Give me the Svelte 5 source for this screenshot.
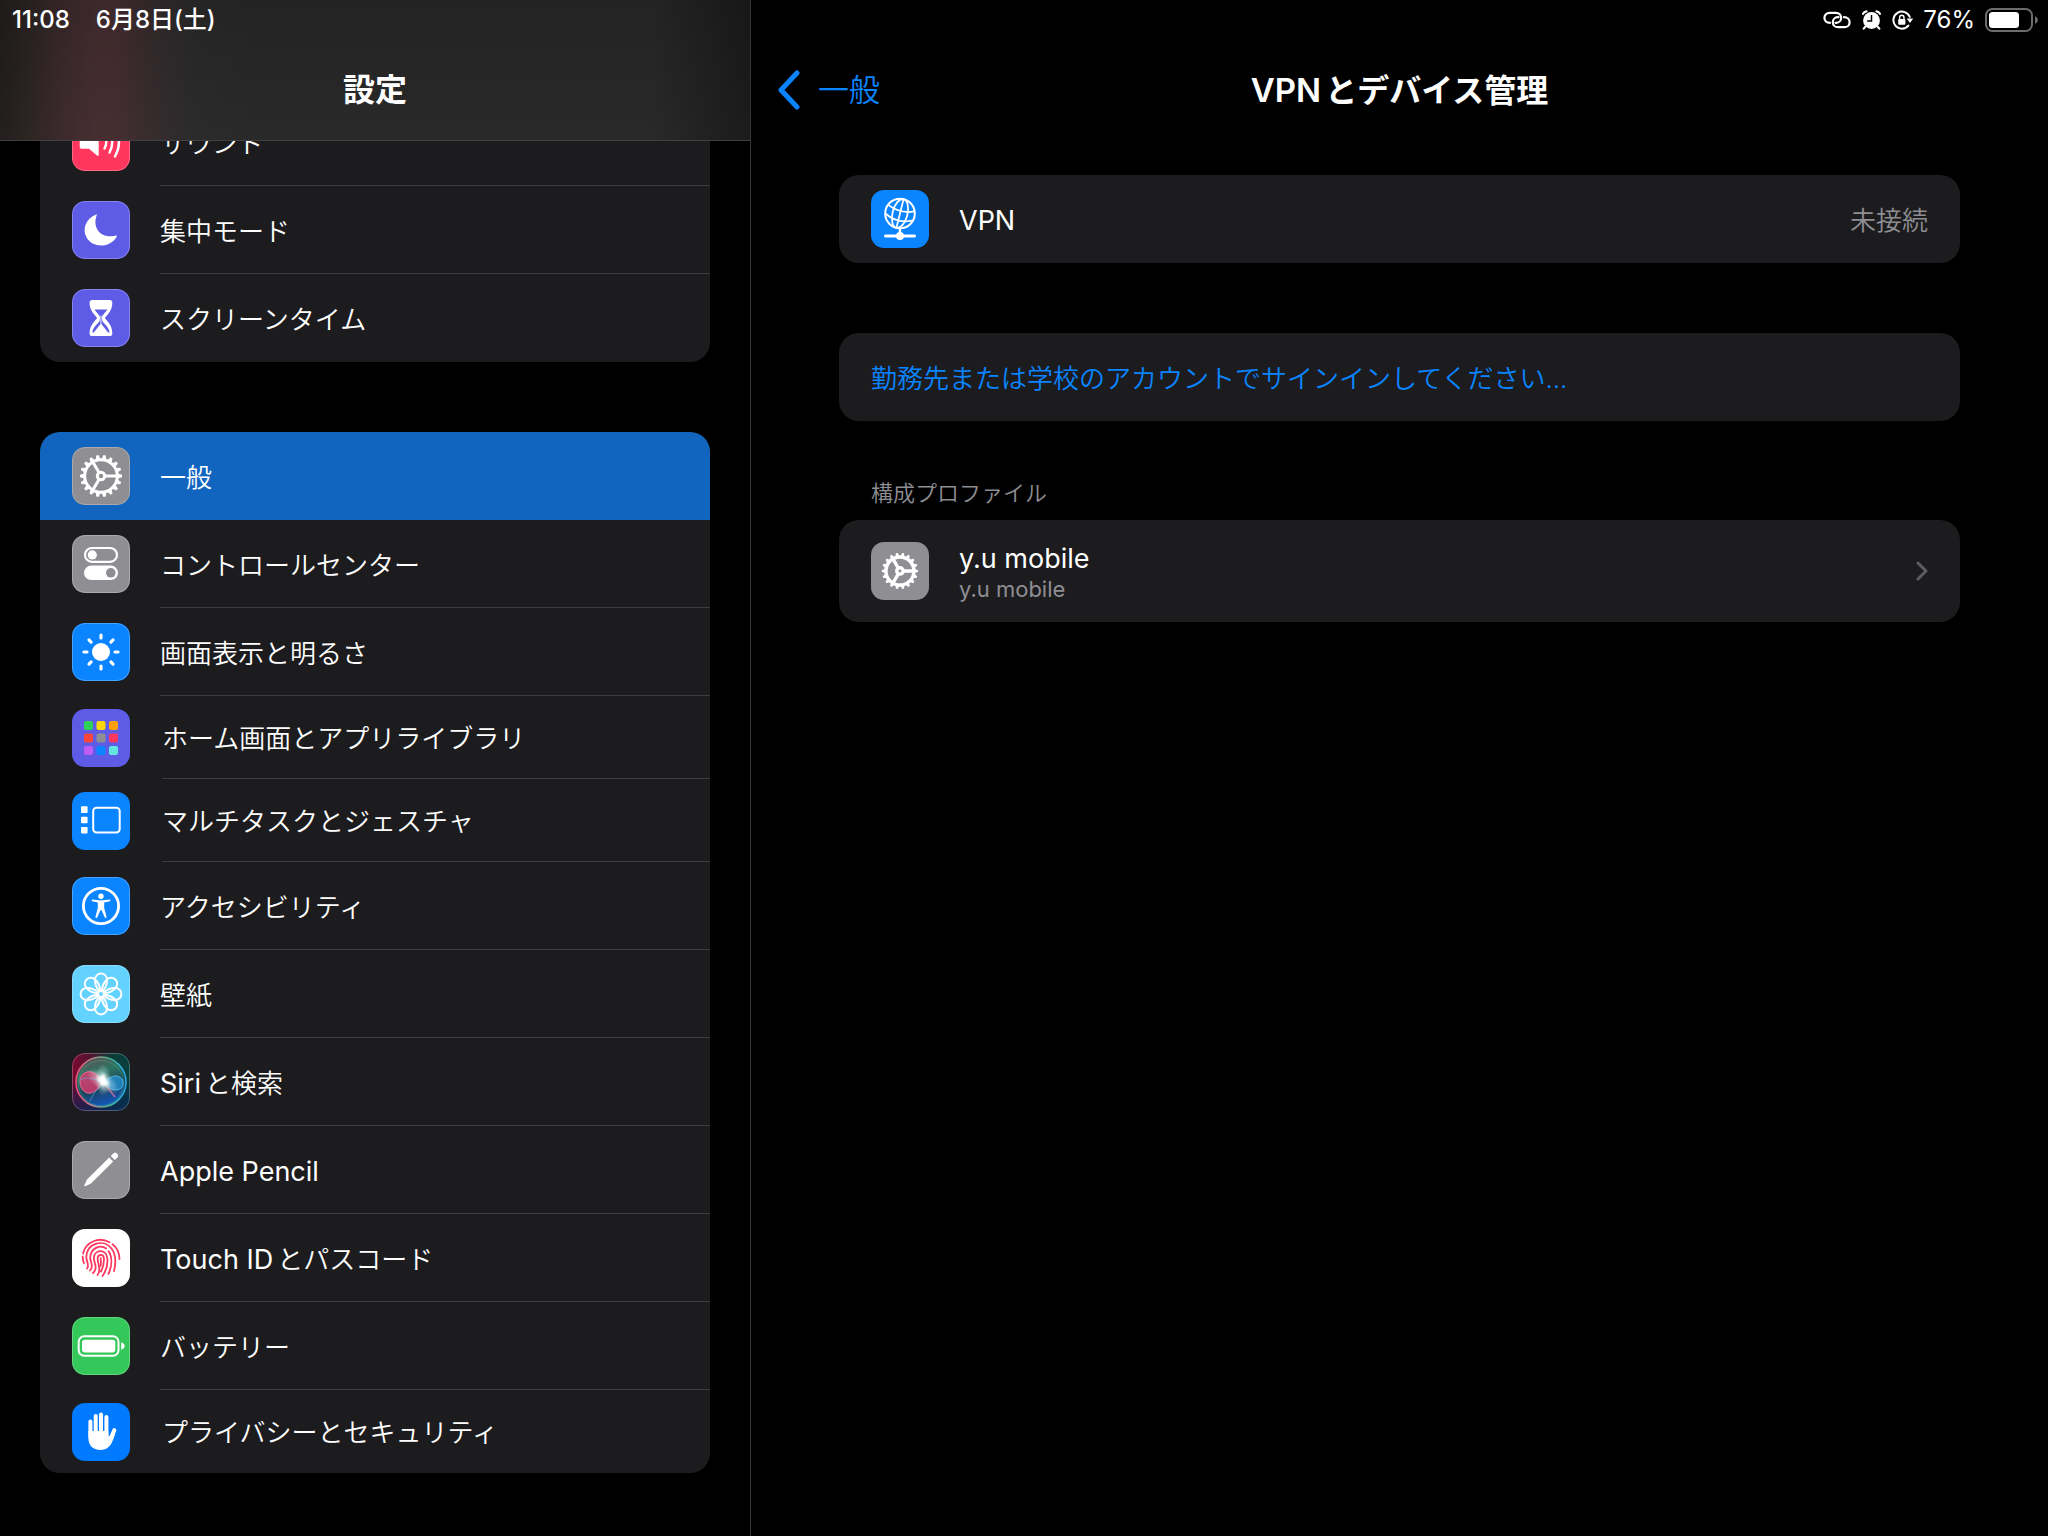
<script lang="ts">
  type Item = { icon: string; tone: string; label: string; latin?: string; compact?: boolean };

  const alerts: Item[] = [
    { icon: "sound", tone: "pink", label: "サウンド" },
    { icon: "moon", tone: "indigo", label: "集中モード" },
    { icon: "hourglass", tone: "indigo", label: "スクリーンタイム" }
  ];

  const device: Item[] = [
    { icon: "gear", tone: "gray", label: "一般" },
    { icon: "toggles", tone: "gray", label: "コントロールセンター" },
    { icon: "sun", tone: "blue", label: "画面表示と明るさ" },
    { icon: "grid", tone: "indigo flat", label: "ホーム画面とアプリライブラリ", compact: true },
    { icon: "multitask", tone: "blue flat", label: "マルチタスクとジェスチャ", compact: true },
    { icon: "access", tone: "blue", label: "アクセシビリティ" },
    { icon: "flower", tone: "cyan", label: "壁紙" },
    { icon: "siri", tone: "dark", latin: "Siri", label: "と検索" },
    { icon: "pencil", tone: "gray", latin: "Apple Pencil", label: "" },
    { icon: "finger", tone: "white", latin: "Touch ID", label: "とパスコード" },
    { icon: "battery", tone: "green", label: "バッテリー" },
    { icon: "hand", tone: "azure flat", label: "プライバシーとセキュリティ", compact: true }
  ];

  const appColors = [
    "#30d158", "#ffd60a", "#ff9f0a",
    "#ff453a", "#8e8e93", "#ff375f",
    "#bf5af2", "#0a84ff", "#63e6e2"
  ];

  const teeth = Array.from({ length: 18 }, (_, i) => i * 20);
  const eighths = Array.from({ length: 8 }, (_, i) => i * 45);

  let selected = $state("gear");
</script>

{#snippet gear(weight: number)}
  <g fill="none" stroke="#fff" stroke-width={weight}>
    <circle cx="29" cy="29" r="16.3" />
    <circle cx="29" cy="29" r="3.7" />
    {#each [0, 120, 240] as angle}
      <path d="M32.5 29H45" transform="rotate({angle} 29 29)" />
    {/each}
  </g>
  {#each teeth as angle}
    <path fill="#fff" d="M45.5 26.6L50 27.8V30.2L45.5 31.4Z" transform="rotate({angle} 29 29)" />
  {/each}
{/snippet}

{#snippet glyph(name: string)}
  <svg viewBox="0 0 58 58" aria-hidden="true">
    {#if name === "sound"}
      <path fill="#fff" d="M9.5 22H17L25 15.5Q26.7 14.4 26.7 16.5V41.5Q26.7 43.6 25 42.5L17 35.8H9.5Q7.7 35.8 7.7 34V24Q7.7 22 9.5 22Z" />
      <g fill="none" stroke="#fff" stroke-width="2.4" stroke-linecap="round">
        <path d="M32.5 22.5Q36 29 32.5 35.5" />
        <path d="M37.5 18.5Q43 29 37.5 39.5" />
        <path d="M43 14.5Q51 29 43 43.5" />
      </g>
    {:else if name === "moon"}
      <path fill="#fff" d="M24.2 13.4C14 17 9.9 28 14.5 36.3C19.8 46.2 35 47.6 43 38.3C44.2 36.8 45 35.2 44.7 34.7C44.3 34.1 43 34.6 41.6 34.9C29.5 37.2 20.4 28 24.4 15C25 13.4 25 13.1 24.2 13.4Z" />
    {:else if name === "hourglass"}
      <path fill="#fff" fill-rule="evenodd" d="M20.3 11H37.5Q40.3 11 40.3 13.6C40.3 20.5 37.5 23.8 32.8 29C37.5 34.2 40.3 37.8 40.3 44.4Q40.3 47 37.5 47H20.3Q17.6 47 17.6 44.4C17.6 37.8 20.5 34.2 25.2 29C20.5 23.8 17.6 20.5 17.6 13.6Q17.6 11 20.3 11ZM22.6 20.6C24 23.2 27.2 25.6 28.1 28.2L27.6 32C26 34.5 20.6 38.5 20.4 43.4H21.8L28.5 35V26.5H29.4V35L36.1 43.4H37.5C37.3 38.5 31.9 34.5 30.3 32L29.8 28.2C30.7 25.6 33.9 23.2 35.3 20.6Z" />
    {:else if name === "gear"}
      {@render gear(3)}
    {:else if name === "profile"}
      <g transform="translate(4 4) scale(0.86)">{@render gear(4)}</g>
    {:else if name === "toggles"}
      <rect x="13" y="13" width="32" height="13.8" rx="6.9" fill="none" stroke="#fff" stroke-width="2.2" />
      <circle cx="20.3" cy="19.9" r="4.6" fill="#fff" />
      <rect x="12" y="30.6" width="34" height="14.4" rx="7.2" fill="#fff" />
      <circle cx="38.8" cy="37.8" r="4.8" fill="#8e8e93" />
    {:else if name === "sun"}
      <circle cx="29" cy="29" r="9" fill="#fff" />
      {#each eighths as angle}
        <path d="M29 12V15" stroke="#fff" stroke-width="3.2" stroke-linecap="round" transform="rotate({angle} 29 29)" />
      {/each}
    {:else if name === "grid"}
      {#each appColors as color, i}
        <rect x={12 + (i % 3) * 12.5} y={12 + Math.floor(i / 3) * 12.5} width="9" height="9" rx="2" fill={color} />
      {/each}
    {:else if name === "multitask"}
      {#each [14.3, 24.7, 35] as y}
        <rect x="9" {y} width="6.6" height="6.6" rx="1" fill="#fff" />
      {/each}
      <rect x="21.2" y="15.7" width="26.5" height="24.8" rx="3.4" fill="none" stroke="#fff" stroke-width="2" />
    {:else if name === "access"}
      <circle cx="29" cy="29" r="17.6" fill="none" stroke="#fff" stroke-width="2.8" />
      <circle cx="29" cy="19.2" r="2.7" fill="#fff" />
      <path fill="#fff" d="M20 22.4L27 23.2H31L38 22.4Q39 23.6 38 24.2L32.2 25.4V31L34.6 40Q33.8 41.6 32.8 40.6L29.6 33.2H28.4L25.2 40.6Q24.2 41.6 23.4 40L25.8 31V25.4L20 24.2Q19 23.6 20 22.4Z" />
    {:else if name === "flower"}
      <g fill="none" stroke="#fff" stroke-width="2">
        {#each eighths as angle}
          <path d="M27.5 26.4C24 22.5 22.8 18.5 23 14.6A6 6 0 0 1 35 14.6C35.2 18.5 34 22.5 30.5 26.4" transform="rotate({angle} 29 29)" />
        {/each}
        <circle cx="29" cy="29" r="3" />
      </g>
    {:else if name === "siri"}
      <defs>
        <linearGradient id="siri-bg">
          <stop offset="0" stop-color="#7c0830" />
          <stop offset="0.35" stop-color="#4c1830" />
          <stop offset="0.7" stop-color="#0c3c38" />
          <stop offset="1" stop-color="#06403f" />
        </linearGradient>
        <linearGradient id="siri-shade" x2="0" y2="1">
          <stop offset="0.4" stop-color="#0a2050" stop-opacity="0" />
          <stop offset="1" stop-color="#0c2458" stop-opacity="0.8" />
        </linearGradient>
        <linearGradient id="siri-orb" x2="0.3" y2="1">
          <stop offset="0" stop-color="#6c4a50" />
          <stop offset="0.4" stop-color="#2c7464" />
          <stop offset="0.7" stop-color="#1c4458" />
          <stop offset="1" stop-color="#1454b0" />
        </linearGradient>
        <linearGradient id="siri-ring">
          <stop offset="0" stop-color="#f04874" />
          <stop offset="0.35" stop-color="#b08c90" />
          <stop offset="0.65" stop-color="#48b890" />
          <stop offset="1" stop-color="#2ca4e0" />
        </linearGradient>
        <radialGradient id="siri-glow">
          <stop offset="0" stop-color="#fff" />
          <stop offset="0.25" stop-color="#fff" stop-opacity="0.9" />
          <stop offset="0.5" stop-color="#e0fff8" stop-opacity="0.35" />
          <stop offset="1" stop-color="#fff" stop-opacity="0" />
        </radialGradient>
      </defs>
      <rect width="58" height="58" fill="url(#siri-bg)" />
      <rect width="58" height="58" fill="url(#siri-shade)" />
      <circle cx="29" cy="29" r="25" fill="url(#siri-orb)" stroke="url(#siri-ring)" stroke-width="1.6" />
      <circle cx="29" cy="30" r="22.5" fill="none" stroke="#48d0a8" stroke-opacity="0.3" />
      <path fill="#e83a70" fill-opacity="0.75" stroke="#ff7098" stroke-width="0.8" d="M32 29C26 20 18 16 11.5 20.5C6 25 7 35 13 39C20 43 26 36 32 29Z" />
      <path fill="#2494d8" fill-opacity="0.75" stroke="#58c8f4" stroke-width="0.8" d="M32 29C39 22 46 21 50 26C53 31 50 37 44 37C38 37 35 33 32 29Z" />
      <path fill="none" stroke="#68a8e8" stroke-opacity="0.6" d="M8 27C14 23 22 26 31 29C26 36 21 40 18 48" />
      <path stroke="#e070a0" stroke-opacity="0.7" stroke-width="2" d="M32 30L43 44" />
      <ellipse cx="31" cy="28" rx="18" ry="9" fill="url(#siri-glow)" transform="rotate(35 31 28)" />
      <ellipse cx="31" cy="27" rx="8" ry="16" fill="url(#siri-glow)" />
    {:else if name === "pencil"}
      <path fill="#fff" d="M37.2 16.6L41.2 20.4L19 42.6L13.4 45.3Q11.7 45.6 12.4 43.9L15 38.6Z" />
      <path fill="#fff" d="M38.8 15L41.6 12.2Q43 10.7 44.8 12.3L45.6 13.1Q47 14.8 45.6 16.2L42.8 18.9Z" />
    {:else if name === "finger"}
      <g fill="none" stroke="#ff375f" stroke-width="1.8" stroke-linecap="round">
        <path d="M11 24.5C14 12.5 27 7.5 37.5 13.2" />
        <path d="M40.5 15.3C45.5 19 47.3 24 47.5 30" />
        <path d="M10.7 27.5C10.5 30 11 32 12 34.2" />
        <path d="M15 39.5C18 36 14 32 14.3 28C15 13.8 32 9.5 39.5 19.5C44 25.5 44 34 42 42" />
        <path d="M18 41.5C22.5 36.5 18 33 18.2 28.5C18.6 19 28 15.3 34.2 19.4" />
        <path d="M36.7 22.3C40.5 28 40 37 36.5 45" />
        <path d="M21 44.2C26.5 38 21.7 34.5 21.9 28.8C22.6 20.5 34 19.5 35.3 29C36 35 34 42 30.5 47" />
        <path d="M25.5 46C30 41 25.5 35 25.6 29.2C26 24.7 31.5 24.7 31.9 29.2C32.2 34 31.2 38.5 29 42.5" />
        <path d="M28.7 29.2C29 32 29 34.5 28.7 37" />
      </g>
    {:else if name === "battery"}
      <rect x="6.7" y="19.3" width="39.8" height="19.4" rx="5.5" fill="none" stroke="#fff" stroke-width="2" />
      <rect x="10" y="22.7" width="33.3" height="12.7" rx="2.8" fill="#fff" />
      <path fill="#fff" d="M49.2 25.2Q52.6 26.4 52.6 29Q52.6 31.6 49.2 32.8Z" />
    {:else if name === "hand"}
      <g fill="none" stroke="#fff" stroke-width="4" stroke-linecap="round">
        <path d="M18.4 18.5V34" />
        <path d="M23.7 13V32" />
        <path d="M29 11.5V32" />
        <path d="M34.4 14V34" />
        <path d="M42.4 27.2L37.5 38" />
      </g>
      <path fill="#fff" d="M16.4 28H36.4V33.5L40 31.5L43.2 31C40.5 38 38.5 47 28.8 47C20.5 47 16.4 42 16.4 35Z" />
    {:else if name === "globe"}
      <g fill="none" stroke="#fff" stroke-width="2">
        <circle cx="29" cy="23.5" r="14.8" />
        <g stroke-width="1.8" transform="rotate(14 29 23.5)">
          <ellipse cx="29" cy="23.5" rx="7.5" ry="14.8" />
          <path d="M29 8.7V38.3M15.5 18Q29 24 42.5 18M14.8 27Q29 34.5 43.2 27" />
        </g>
        <path d="M29 38V46" stroke-width="2.4" />
        <path d="M14.5 46H43.5" stroke-width="3" stroke-linecap="round" />
      </g>
      <circle cx="29" cy="46" r="4" fill="#fff" />
    {/if}
  </svg>
{/snippet}

{#snippet group(items: Item[])}
  <ul class="card">
    {#each items as item}
      <li>
        <button
          type="button"
          class="row"
          class:compact={item.compact}
          class:selected={selected === item.icon}
          onclick={() => (selected = item.icon)}
        >
          <span class="icon {item.tone}">{@render glyph(item.icon)}</span>
          <span class="label">
            <span>{#if item.latin}<span class="latin">{item.latin}</span>{/if}{item.label}</span>
          </span>
        </button>
      </li>
    {/each}
  </ul>
{/snippet}

<div class="app">
  <aside>
    <header class="bar">
      <div class="status start">
        <time>11:08</time>
        <time>6月8日(土)</time>
      </div>
      <h1>設定</h1>
    </header>
    <nav>
      {@render group(alerts)}
      {@render group(device)}
    </nav>
  </aside>

  <main>
    <header>
      <div class="status end">
        <svg class="link" viewBox="0 0 28 18" aria-hidden="true">
          <g fill="none" stroke="#fff" stroke-width="2.2" stroke-linecap="round">
            <path d="M7 11.8C3.6 11.8 1.4 9.6 1.4 6.8C1.4 4 3.6 1.8 6.6 1.8H13C16 1.8 18.2 4 18.2 6.8C18.2 9.6 16 11.8 13.4 11.8H12.5" />
            <path d="M21 6.2C24.4 6.2 26.6 8.4 26.6 11.2C26.6 14 24.4 16.2 21.4 16.2H15C12 16.2 9.8 14 9.8 11.2C9.8 8.4 12 6.2 14.6 6.2H15.5" />
          </g>
        </svg>
        <svg class="small" viewBox="0 0 20 20" aria-hidden="true">
          <circle cx="10" cy="10.5" r="8.4" fill="#fff" />
          <g fill="none" stroke="#fff" stroke-width="2.2" stroke-linecap="round">
            <path d="M1.6 3.8Q2.6 1.6 5 1.4M18.4 3.8Q17.4 1.6 15 1.4M3.6 17L2.2 18.6M16.4 17L17.8 18.6" />
          </g>
          <path d="M10 5V11H5.6" fill="none" stroke="#000" stroke-width="1.5" />
        </svg>
        <svg class="small" viewBox="0 0 21 20" aria-hidden="true">
          <path d="M17.8 7A8.5 8.5 0 1 0 16.4 15.6" fill="none" stroke="#fff" stroke-width="2" stroke-linecap="round" />
          <path d="M14.6 8.5H21.2L18 13Z" fill="#fff" />
          <rect x="6.2" y="9" width="7.2" height="5.8" rx="1" fill="#fff" />
          <path d="M7.6 9V7.4A2.2 2.2 0 0 1 12 7.4V9" fill="none" stroke="#fff" stroke-width="1.4" />
        </svg>
        <span>76%</span>
        <svg class="power" viewBox="0 0 54 24" aria-hidden="true">
          <rect x="1" y="1" width="46" height="22" rx="6.5" fill="none" stroke="#6c6c6c" stroke-width="2" />
          <rect x="4" y="4" width="30" height="16" rx="3.5" fill="#fff" />
          <path d="M50 8Q53 9.5 53 12Q53 14.5 50 16Z" fill="#6c6c6c" />
        </svg>
      </div>
      <div class="title">
        <a class="back" href="#general">
          <svg viewBox="0 0 24 40" aria-hidden="true">
            <path d="M20 3L4 20L20 37" fill="none" stroke="#0a84ff" stroke-width="5" stroke-linecap="round" stroke-linejoin="round" />
          </svg>
          一般
        </a>
        <h2><span class="latin">VPN</span>とデバイス管理</h2>
      </div>
    </header>

    <div class="content">
      <section class="card">
        <button type="button" class="row">
          <span class="icon blue flat">{@render glyph("globe")}</span>
          <span class="label"><span class="latin">VPN</span></span>
          <span class="value">未接続</span>
        </button>
      </section>

      <section class="card">
        <button type="button" class="row signin">
          <span class="label">勤務先または学校のアカウントでサインインしてください...</span>
        </button>
      </section>

      <section>
        <h3>構成プロファイル</h3>
        <div class="card">
          <button type="button" class="row tall">
            <span class="icon gray flat">{@render glyph("profile")}</span>
            <span class="label stacked">
              <span class="latin">y.u mobile</span>
              <small>y.u mobile</small>
            </span>
            <svg class="chevron" viewBox="0 0 12 20" aria-hidden="true">
              <path d="M2 2L10 10L2 18" fill="none" stroke="#5d5d61" stroke-width="3" stroke-linecap="round" stroke-linejoin="round" />
            </svg>
          </button>
        </div>
      </section>
    </div>
  </main>
</div>

<style>
  :global(body) { background: #000; }
  .app {
    display: grid;
    grid-template-columns: 751px minmax(0, 1fr);
    min-height: 100vh;
    background: #000;
    color: #fff;
    font-family: Inter, "Noto Sans CJK JP", sans-serif;
    font-size: 26px;
    font-weight: 350;
    line-height: 36px;
  }
  aside { border-right: 1px solid #363638; }
  h1, h2, h3, ul { margin: 0; padding: 0; font: inherit; }
  svg { display: block; }
  .latin { margin-right: 4px; font-size: 27px; font-weight: 400; }

  .bar {
    position: relative;
    z-index: 1;
    height: 140px;
    border-bottom: 1px solid #404042;
    background:
      linear-gradient(rgba(0, 0, 0, 0.14), rgba(0, 0, 0, 0)),
      linear-gradient(90deg, #221f1e 0, #2b2423 25px, #3c2a2c 60px, #462e31 95px, #462e31 115px, #372c2e 150px, #2c2b2c 190px, #292929 250px, #292929 650px, #1b1b1b 100%);
  }
  .status {
    display: flex;
    align-items: center;
    height: 40px;
    font-size: 24px;
    font-weight: 400;
  }
  .status.start { gap: 26px; padding: 0 12px; font-weight: 500; }
  .status.end { justify-content: flex-end; gap: 10px; padding: 0 9px; }
  .link { width: 28px; height: 18px; }
  .small { width: 21px; height: 20px; }
  .power { width: 54px; height: 24px; }
  h1, h2 { font-size: 32px; font-weight: 700; line-height: 100px; text-align: center; }
  h2 .latin { font-size: 33px; font-weight: 600; }
  .title { position: relative; }
  .back {
    position: absolute;
    left: 26px;
    display: flex;
    align-items: center;
    gap: 17px;
    color: #0a84ff;
    font-size: 31px;
    line-height: 100px;
    text-decoration: none;
  }
  .back svg { width: 24px; height: 40px; }

  nav { display: grid; gap: 70px; padding: 0 40px; margin-top: -43px; }
  .card { overflow: hidden; border-radius: 20px; background: #1c1c1e; list-style: none; }
  .row {
    display: flex;
    align-items: center;
    gap: 30px;
    width: 100%;
    height: 88px;
    padding: 0 0 0 32px;
    border: 0;
    background: none;
    color: inherit;
    font: inherit;
    text-align: left;
  }
  .row.compact { height: 83px; gap: 32px; }
  .row.selected { background: #1165bf; }
  .label { flex: 1; align-self: stretch; display: flex; align-items: center; padding-top: 4px; }
  nav .label { border-bottom: 1px solid #3d3d40; }
  nav li:last-child .label, .selected .label { border-color: transparent; }

  .icon { flex: none; width: 58px; height: 58px; overflow: hidden; border-radius: 13px; position: relative; }
  .icon::after { content: ""; position: absolute; inset: 0; border: 1px solid rgba(255, 255, 255, 0.25); border-radius: 13px; }
  .icon.flat::after { border: 0; }
  .pink { background: #ff375f; }
  .indigo { background: #5e5ce6; }
  .gray { background: #8e8e93; }
  .blue { background: #0a84ff; }
  .azure { background: #007aff; }
  .cyan { background: #64d2ff; }
  .dark { background: #1c1c1e; }
  .white { background: #fff; }
  .green { background: #34c759; }

  main > header { height: 140px; }
  .content { display: grid; gap: 70px; padding: 35px 88px; }
  .content .row { padding: 0 32px; }
  .value { padding-top: 4px; color: #8e8e93; }
  .content .signin { color: #0a84ff; }
  h3 { padding: 0 32px; margin: -14px 0 11px; color: #8e8e93; font-size: 22px; line-height: 32px; }
  .content .tall { height: 102px; }
  .stacked { flex-direction: column; align-items: flex-start; justify-content: center; }
  .stacked .latin { line-height: 32px; }
  small { color: #8e8e93; font-size: 22px; font-weight: 400; line-height: 28px; }
  .chevron { width: 12px; height: 20px; }
</style>
